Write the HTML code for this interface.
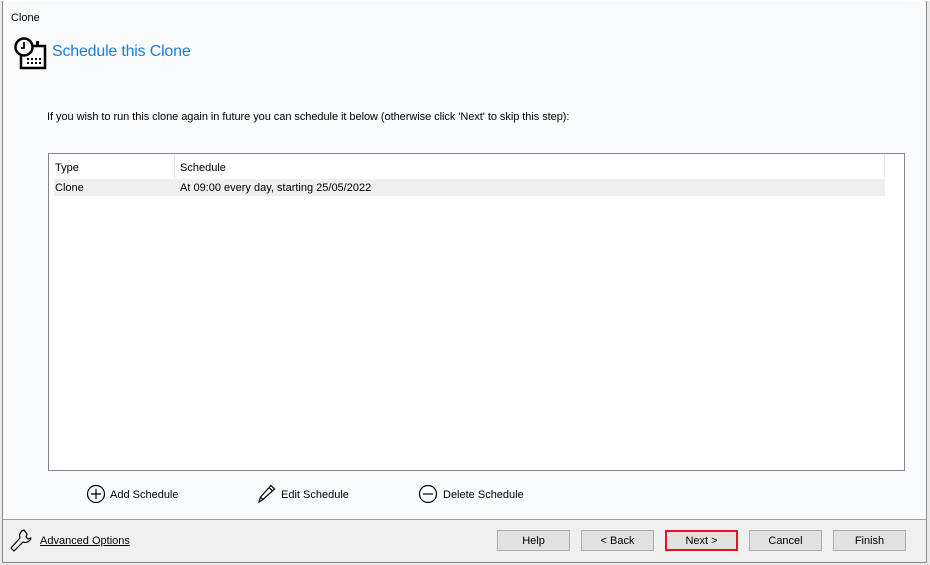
<!DOCTYPE html>
<html><head><style>
*{margin:0;padding:0;box-sizing:border-box}
body{width:930px;height:565px;background:#e9e9e9;font-family:"Liberation Sans",sans-serif;font-size:11px;color:#000;position:relative;overflow:hidden}
.win{position:absolute;left:2px;top:0;width:925px;height:563px;background:#f9fbfd;border:1px solid #8a8a8a;border-top:none}
.a{position:absolute}
.btn{position:absolute;top:530px;width:73px;height:21px;background:#e1e1e1;border:1px solid #adadad;text-align:center;line-height:21px;font-size:11px}
</style></head><body>
<div class="win"></div>
<div class="a" style="left:0;top:0;width:930px;height:1px;background:#fff"></div>
<div class="a" style="left:11px;top:12px;font-size:11px">Clone</div>
<svg class="a" style="left:14px;top:37px" width="34" height="34" viewBox="0 0 34 34">
<rect x="7" y="9" width="24" height="22" fill="#fff" stroke="#000" stroke-width="2.5"/>
<rect x="22" y="4" width="3" height="6" fill="#000"/>
<circle cx="10" cy="10" r="8.5" fill="#fff" stroke="#000" stroke-width="2.5"/>
<path d="M10 5v6h-3" fill="none" stroke="#000" stroke-width="1.8"/>
<g fill="#000"><rect x="13" y="21" width="2" height="2"/><rect x="17" y="21" width="2" height="2"/><rect x="21" y="21" width="2" height="2"/><rect x="25" y="21" width="2" height="2"/><rect x="13" y="25" width="2" height="2"/><rect x="17" y="25" width="2" height="2"/><rect x="21" y="25" width="2" height="2"/><rect x="25" y="25" width="2" height="2"/></g>
</svg>
<div class="a" style="left:52px;top:43px;font-size:16px;color:#1a7fd4;letter-spacing:-0.2px">Schedule this Clone</div>
<div class="a" style="left:47px;top:111px;letter-spacing:-0.05px">If you wish to run this clone again in future you can schedule it below (otherwise click 'Next' to skip this step):</div>
<div class="a" style="left:48px;top:153px;width:857px;height:318px;background:#fff;border:1px solid #828790"></div>
<div class="a" style="left:174px;top:155px;width:1px;height:23px;background:#e5e5e5"></div>
<div class="a" style="left:884px;top:155px;width:1px;height:23px;background:#e5e5e5"></div>
<div class="a" style="left:55px;top:162px">Type</div>
<div class="a" style="left:180px;top:162px">Schedule</div>
<div class="a" style="left:54px;top:179px;width:831px;height:17px;background:#efefef"></div>
<div class="a" style="left:55px;top:182px">Clone</div>
<div class="a" style="left:180px;top:182px">At 09:00 every day, starting 25/05/2022</div>
<svg class="a" style="left:86px;top:484px" width="20" height="20"><circle cx="10" cy="10" r="8.5" fill="none" stroke="#000" stroke-width="1.2"/><path d="M10 5v10M5 10h10" stroke="#000" stroke-width="1.2"/></svg>
<div class="a" style="left:110px;top:489px">Add Schedule</div>
<svg class="a" style="left:256px;top:482px" width="22" height="22"><path d="M3 20l1.5-5L15 3.5l3.5 3.5L7 17.5z M4.5 15l3 3 M13 5.5l3.5 3.5" fill="none" stroke="#000" stroke-width="1.2"/></svg>
<div class="a" style="left:281px;top:489px">Edit Schedule</div>
<svg class="a" style="left:418px;top:484px" width="20" height="20"><circle cx="10" cy="10" r="8.5" fill="none" stroke="#000" stroke-width="1.2"/><path d="M5 10h10" stroke="#000" stroke-width="1.2"/></svg>
<div class="a" style="left:443px;top:489px">Delete Schedule</div>
<div class="a" style="left:3px;top:519px;width:923px;height:1px;background:#a0a0a0"></div>
<div class="a" style="left:3px;top:520px;width:923px;height:42px;background:#f0f0f0"></div>
<svg class="a" style="left:8px;top:526px" width="28" height="28"><path d="M16 4a6 6 0 0 0 -4 8L3 22l3 3 9-9a6 6 0 0 0 8-4l-3 1-2-2 1-3z" fill="none" stroke="#000" stroke-width="1.2" stroke-linejoin="round"/></svg>
<div class="a" style="left:40px;top:535px;text-decoration:underline">Advanced Options</div>
<div class="btn" style="left:497px">Help</div>
<div class="btn" style="left:581px">&lt; Back</div>
<div class="btn" style="left:665px;border:2px solid #e81123;line-height:19px">Next &gt;</div>
<div class="btn" style="left:749px">Cancel</div>
<div class="btn" style="left:833px">Finish</div>
</body></html>
